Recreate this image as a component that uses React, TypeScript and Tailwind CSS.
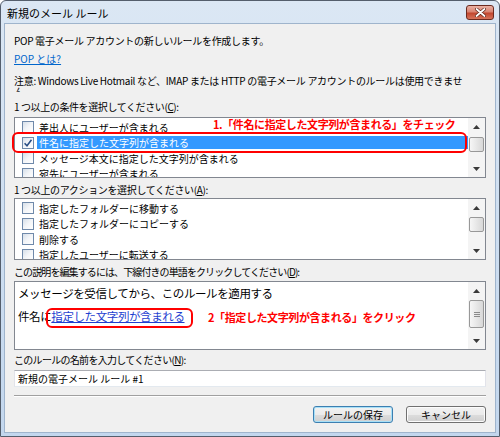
import React from "react";

function Checkbox({ checked = false }: { checked?: boolean }) {
  return (
    <span className="flex h-[12px] w-[12px] shrink-0 items-center justify-center border border-[#6f89aa] bg-gradient-to-br from-[#d6dfe9] via-[#f3f5f8] to-white">
      {checked && (
        <svg width="10" height="10" viewBox="0 0 10 10">
          <path d="M1.6 5.2 L4 7.7 L8.5 1.8" fill="none" stroke="#2b4f86" strokeWidth="1.6" />
        </svg>
      )}
    </span>
  );
}

function Arrow({ up = false }: { up?: boolean }) {
  return (
    <svg width="7" height="4" viewBox="0 0 7 4">
      <polygon points={up ? "0,4 3.5,0 7,4" : "0,0 7,0 3.5,4"} fill="#3a3a3a" />
    </svg>
  );
}

function ScrollBar({ thumb, grip = false }: { thumb: string; grip?: boolean }) {
  return (
    <div className="flex w-[17px] shrink-0 flex-col bg-[#f4f4f4]">
      <div className="flex h-[17px] items-center justify-center">
        <Arrow up />
      </div>
      <div className="flex-1 px-[1px]">
        <div
          className={
            "flex flex-col items-center justify-center gap-[1px] rounded-[2px] border border-[#989898] bg-gradient-to-r from-[#f6f6f6] to-[#d8d8d8] " +
            thumb
          }
        >
          {grip && (
            <>
              <div className="h-[1px] w-[6px] bg-[#8a8a8a]" />
              <div className="h-[1px] w-[6px] bg-[#8a8a8a]" />
              <div className="h-[1px] w-[6px] bg-[#8a8a8a]" />
            </>
          )}
        </div>
      </div>
      <div className="flex h-[17px] items-center justify-center">
        <Arrow />
      </div>
    </div>
  );
}

function ListBox({
  items,
  selected = -1,
  height,
  thumb,
  children,
}: {
  items: string[];
  selected?: number;
  height: string;
  thumb: string;
  children?: React.ReactNode;
}) {
  return (
    <div className={"relative flex border border-[#828790] bg-white " + height}>
      <div className="flex-1 overflow-hidden pt-[1.5px]">
        {items.map((t, i) => (
          <div key={t} className="flex h-[15.5px] shrink-0 items-center pl-[7px]">
            <Checkbox checked={i === selected} />
            <span
              className={
                "ml-[3px] h-[13px] whitespace-nowrap px-[2px] text-[10px] leading-[13px] " +
                (i === selected ? "flex-1 bg-[#3399ff] text-white" : "")
              }
            >
              {t}
            </span>
          </div>
        ))}
      </div>
      <ScrollBar thumb={thumb} />
      {children}
    </div>
  );
}

function Label({ text, hot, className = "" }: { text: string; hot: string; className?: string }) {
  return (
    <div className={"h-[14px] whitespace-nowrap text-[10px] leading-[14px] " + className}>
      {text}(<span className="underline">{hot}</span>):
    </div>
  );
}

export default function App() {
  return (
    <div className="flex h-[437px] w-[500px] flex-col overflow-hidden rounded-t-[6px] border border-[#545e6c] bg-gradient-to-b from-[#dbe7f4] to-[#c3d7ee] font-['Noto_Sans_CJK_JP',sans-serif] text-black">
      {/* title bar */}
      <div className="flex h-[22px] shrink-0 items-center justify-between pl-[6px] pr-[5px]">
        <span className="pt-[2px] text-[11px] leading-[14px]">新規のメール ルール</span>
        <div className="flex h-[15px] w-[28px] items-center justify-center rounded-[3px] border border-[#6b2a1f] bg-[linear-gradient(#eab1a4_0%,#d98472_45%,#c2472f_55%,#d6745b_100%)]">
          <svg width="11" height="9" viewBox="0 0 11 9">
            <path d="M1.5 1 L9.5 8 M9.5 1 L1.5 8" stroke="#5a2418" strokeWidth="3.2" strokeLinecap="round" />
            <path d="M1.5 1 L9.5 8 M9.5 1 L1.5 8" stroke="#ffffff" strokeWidth="1.8" strokeLinecap="round" />
          </svg>
        </div>
      </div>

      {/* client area */}
      <div className="mx-[3px] flex h-[410px] shrink-0 flex-col border border-[#9fb4cc] bg-[#f0f0f0] px-[9px]">
        <div className="mt-[9px] h-[16px] whitespace-nowrap text-[10px] leading-[16px] tracking-[-0.3px]">
          POP 電子メール アカウントの新しいルールを作成します。
        </div>
        <div className="mt-[2px] h-[16px] text-[10px] leading-[16px]">
          <span className="text-[#0066cc] underline">POP とは?</span>
        </div>
        <div className="mt-[8px] h-[17px] overflow-hidden whitespace-nowrap text-[10px] leading-[11px] tracking-[-0.3px]">
          注意: Windows Live Hotmail など、IMAP または HTTP の電子メール アカウントのルールは使用できませ
          <br />
          ん。
        </div>

        <Label className="mt-[8px] tracking-[-0.4px]" text="1 つ以上の条件を選択してください" hot="C" />
        <div className="mt-[3px]">
          <ListBox
            height="h-[61px]"
            selected={1}
            thumb="mt-[2px] h-[15px]"
            items={[
              "差出人にユーザーが含まれる",
              "件名に指定した文字列が含まれる",
              "メッセージ本文に指定した文字列が含まれる",
              "宛先にユーザーが含まれる",
            ]}
          >
            <div className="absolute left-[-3px] top-[14px] h-[21px] w-[455px] rounded-[6px] border-2 border-[#ff0000]" />
            <div className="absolute left-[198px] top-[-1px] h-[14px] whitespace-nowrap text-[11px] font-bold leading-[14px] tracking-[-0.4px] text-[#ff0000]">
              1.「件名に指定した文字列が含まれる」をチェック
            </div>
          </ListBox>
        </div>

        <Label className="mt-[5px] tracking-[-0.35px]" text="1 つ以上のアクションを選択してください" hot="A" />
        <div className="mt-[1px]">
          <ListBox
            height="h-[62px]"
            thumb="mt-[1px] h-[15px]"
            items={[
              "指定したフォルダーに移動する",
              "指定したフォルダーにコピーする",
              "削除する",
              "指定したユーザーに転送する",
            ]}
          />
        </div>

        <Label
          className="mt-[5px] tracking-[-0.9px]"
          text="この説明を編集するには、下線付きの単語をクリックしてください"
          hot="D"
        />
        <div className="relative mt-[2px] flex h-[69px] shrink-0 border border-[#828790] bg-white">
          <div className="flex-1 pl-[3px] pt-[4px] text-[11.5px] leading-[15px] tracking-[-0.4px]">
            <div className="whitespace-nowrap">メッセージを受信してから、このルールを適用する</div>
            <div className="mt-[8px] whitespace-nowrap">
              件名に<span className="text-[#1f3fd0] underline">指定した文字列が含まれる</span>
            </div>
          </div>
          <ScrollBar thumb="mt-[1px] h-[28px]" grip />
          <div className="absolute left-[31px] top-[26px] h-[20px] w-[147px] rounded-[6px] border-2 border-[#ff0000]" />
          <div className="absolute left-[193px] top-[28px] h-[14px] whitespace-nowrap text-[11px] font-bold leading-[14px] tracking-[-0.4px] text-[#ff0000]">
            2「指定した文字列が含まれる」をクリック
          </div>
        </div>

        <Label className="mt-[3px] tracking-[-0.7px]" text="このルールの名前を入力してください" hot="N" />
        <div className="mt-[3px] flex h-[17px] shrink-0 items-center whitespace-nowrap border border-[#e2e3ea] border-t-[#abadb3] border-b-[#e3e9ef] bg-white pl-[3px] text-[10px]">
          新規の電子メール ルール #1
        </div>

        <div className="mt-[8px] h-[2px] shrink-0 border-t border-b border-t-[#a0a0a0] border-b-white" />

        <div className="mt-[9px] flex justify-end gap-[13px]">
          <button className="h-[17px] w-[80px] rounded-[3px] border border-[#3c7fb1] bg-[linear-gradient(#f2f2f2_0%,#ebebeb_50%,#dddddd_50%,#cfcfcf_100%)] text-[10px] leading-[15px] shadow-[inset_0_0_0_1px_#a8e0f7]">
            ルールの保存
          </button>
          <button className="h-[17px] w-[80px] rounded-[3px] border border-[#707070] bg-[linear-gradient(#f2f2f2_0%,#ebebeb_50%,#dddddd_50%,#cfcfcf_100%)] text-[10px] leading-[15px] shadow-[inset_0_0_0_1px_#fcfcfc]">
            キャンセル
          </button>
        </div>
      </div>
    </div>
  );
}
